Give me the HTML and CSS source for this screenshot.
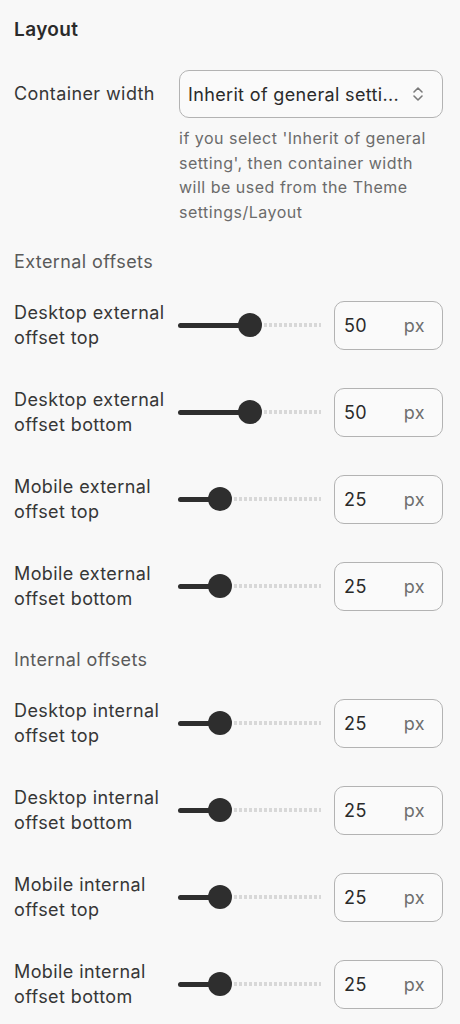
FILE: index.html
```html
<!DOCTYPE html>
<html lang="en">
<head>
<meta charset="utf-8">
<title>Layout</title>
<link rel="stylesheet" href="styles.css">
</head>
<body>
<div class="panel">
  <h2 class="title">Layout</h2>

  <div class="field">
    <div class="label">Container width</div>
    <div class="control-col">
      <div class="select">
        <span class="select-text">Inherit of general setti...</span>
        <svg class="chev" width="12" height="16" viewBox="0 0 12 16" fill="none" stroke="#7a7a7a" stroke-width="1.6" stroke-linecap="round" stroke-linejoin="round"><path d="M2 6 L6 2 L10 6"/><path d="M2 10 L6 14 L10 10"/></svg>
      </div>
      <p class="help">if you select 'Inherit of general setting', then container width will be used from the Theme settings/Layout</p>
    </div>
  </div>

  <div class="group">
    <div class="group-title">External offsets</div>
    <div class="rows">
      <div class="row">
        <div class="label">Desktop external offset top</div>
        <div class="slider"><span class="fill" style="width:64px"></span><span class="thumb"></span><span class="rest"></span></div>
        <div class="num"><span class="val">50</span><span class="unit">px</span></div>
      </div>
      <div class="row">
        <div class="label">Desktop external offset bottom</div>
        <div class="slider"><span class="fill" style="width:64px"></span><span class="thumb"></span><span class="rest"></span></div>
        <div class="num"><span class="val">50</span><span class="unit">px</span></div>
      </div>
      <div class="row">
        <div class="label">Mobile external offset top</div>
        <div class="slider"><span class="fill" style="width:34px"></span><span class="thumb"></span><span class="rest"></span></div>
        <div class="num"><span class="val">25</span><span class="unit">px</span></div>
      </div>
      <div class="row">
        <div class="label">Mobile external offset bottom</div>
        <div class="slider"><span class="fill" style="width:34px"></span><span class="thumb"></span><span class="rest"></span></div>
        <div class="num"><span class="val">25</span><span class="unit">px</span></div>
      </div>
    </div>
  </div>

  <div class="group">
    <div class="group-title">Internal offsets</div>
    <div class="rows">
      <div class="row">
        <div class="label">Desktop internal offset top</div>
        <div class="slider"><span class="fill" style="width:34px"></span><span class="thumb"></span><span class="rest"></span></div>
        <div class="num"><span class="val">25</span><span class="unit">px</span></div>
      </div>
      <div class="row">
        <div class="label">Desktop internal offset bottom</div>
        <div class="slider"><span class="fill" style="width:34px"></span><span class="thumb"></span><span class="rest"></span></div>
        <div class="num"><span class="val">25</span><span class="unit">px</span></div>
      </div>
      <div class="row">
        <div class="label">Mobile internal offset top</div>
        <div class="slider"><span class="fill" style="width:34px"></span><span class="thumb"></span><span class="rest"></span></div>
        <div class="num"><span class="val">25</span><span class="unit">px</span></div>
      </div>
      <div class="row">
        <div class="label">Mobile internal offset bottom</div>
        <div class="slider"><span class="fill" style="width:34px"></span><span class="thumb"></span><span class="rest"></span></div>
        <div class="num"><span class="val">25</span><span class="unit">px</span></div>
      </div>
    </div>
  </div>
</div>
</body>
</html>
```

FILE: styles.css
```css
html, body {
  margin: 0;
  padding: 0;
  background: #f8f8f8;
}
body {
  font-family: Inter, "Noto Sans", "Liberation Sans", sans-serif;
  color: #303030;
  font-size: 18px;
  letter-spacing: 0.4px;
}
.panel {
  padding: 18px 17px 0 14px;
}
.title {
  margin: 0;
  font-size: 19px;
  line-height: 24px;
  font-weight: 600;
  letter-spacing: 0.4px;
  color: #2a2a2a;
}
.field {
  display: flex;
  margin-top: 28px;
}
.label {
  width: 160px;
  flex: none;
  margin-right: 5px;
  font-size: 18px;
  line-height: 25px;
  color: #363636;
}
.field > .label {
  line-height: 48px;
}
.control-col {
  flex: 1;
}
.select {
  height: 48px;
  box-sizing: border-box;
  border: 1px solid #b3b3b3;
  border-radius: 10px;
  display: flex;
  align-items: center;
  padding: 0 18px 0 8px;
  background: #fafafa;
}
.select-text {
  flex: 1;
  font-size: 18px;
  letter-spacing: 0.35px;
  color: #2a2a2a;
  white-space: nowrap;
}
.chev {
  flex: none;
}
.help {
  margin: 8px 0 0;
  font-size: 16px;
  letter-spacing: 0.5px;
  line-height: 24.6px;
  color: #6b6b6b;
}
.group {
  margin-top: 26px;
}
.group + .group {
  margin-top: 37px;
}
.group-title {
  font-size: 18px;
  line-height: 24px;
  color: #5a5a5a;
  margin-bottom: 26px;
}
.rows {
  display: flex;
  flex-direction: column;
  gap: 37px;
}
.row {
  display: flex;
  align-items: center;
  height: 50px;
}
.slider {
  width: 145px;
  flex: none;
  display: flex;
  align-items: center;
  height: 24px;
  margin-left: -1px;
}
.fill {
  height: 5px;
  background: #2e2e2e;
  border-radius: 3px;
  margin-right: -4px;
  flex: none;
}
.thumb {
  width: 24px;
  height: 24px;
  border-radius: 50%;
  background: #2e2e2e;
  flex: none;
  position: relative;
}
.rest {
  flex: 1;
  height: 4px;
  margin-left: 2px;
  margin-right: 2px;
  background: repeating-linear-gradient(to right, #d8d8d8 0 3px, transparent 3px 5px);
}
.num {
  margin-left: 11px;
  width: 109px;
  height: 49px;
  box-sizing: border-box;
  border: 1px solid #b3b3b3;
  border-radius: 10px;
  display: flex;
  align-items: center;
  padding: 0 17px 0 9px;
  background: #fafafa;
}
.val {
  flex: 1;
  font-size: 18px;
  color: #2a2a2a;
}
.unit {
  font-size: 18px;
  color: #6e6e6e;
}
```
